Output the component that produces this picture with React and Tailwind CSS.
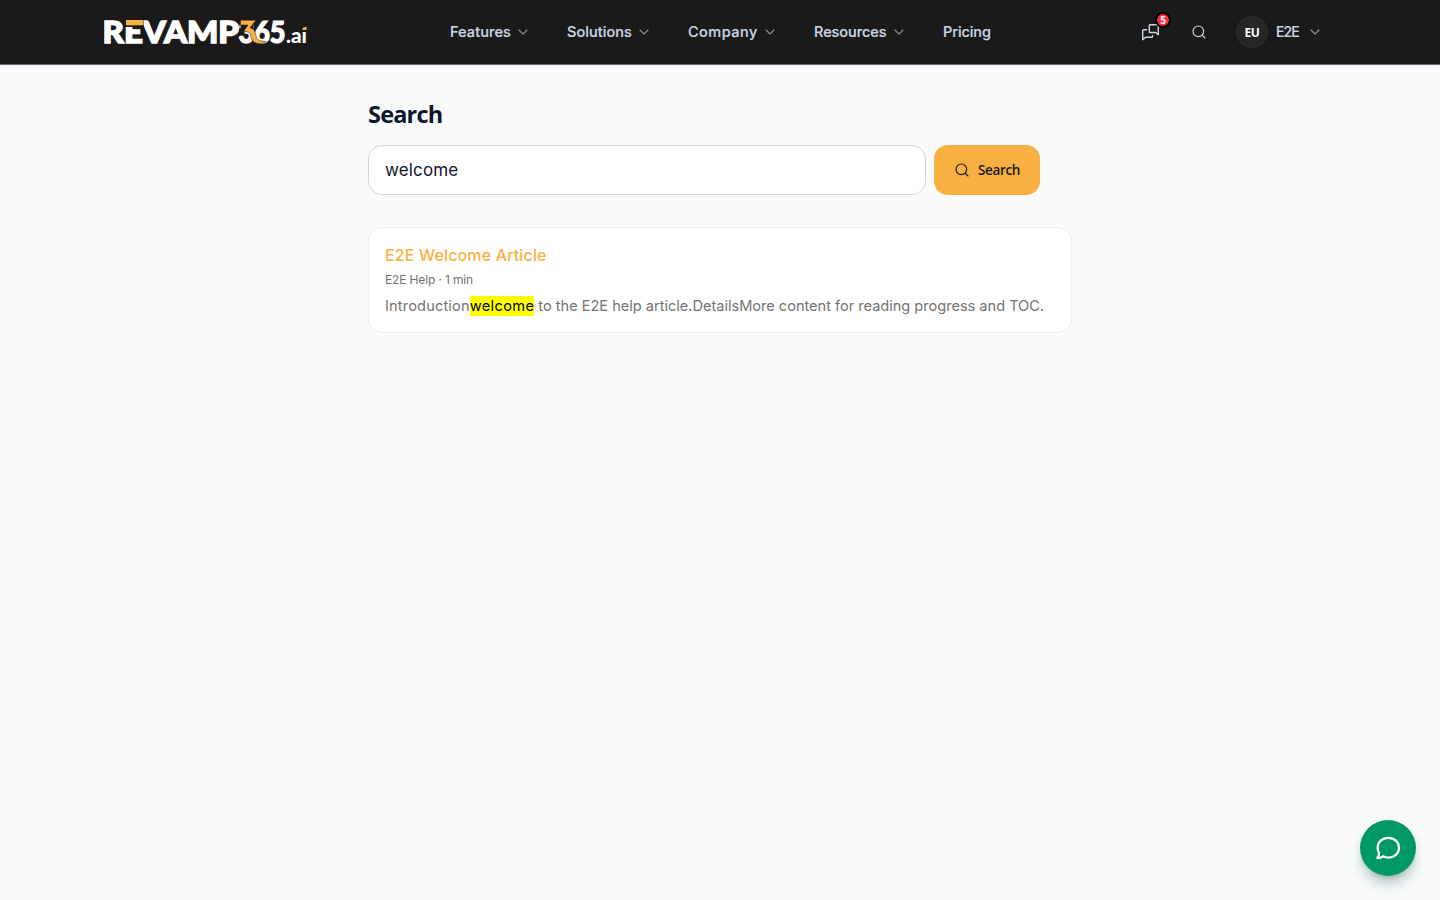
import React from "react";
import { ChevronDown, Search } from "lucide-react";

const NAV = [
  { label: "Features", cls: "w-[61px] tracking-[0.08px]", menu: true },
  { label: "Solutions", cls: "w-[65px] tracking-[0.06px]", menu: true },
  { label: "Company", cls: "w-[70px] tracking-[0.48px]", menu: true },
  { label: "Resources", cls: "w-[73px] tracking-[-0.05px]", menu: true },
  { label: "Pricing", cls: "w-[49px] tracking-[-0.1px]", menu: false },
];

function Logo() {
  return (
    <svg width="208" height="44" viewBox="0 -8 208 44" className="block" fontFamily="Lato, sans-serif" fontWeight="900" aria-label="REVAMP365.ai">
      <g fill="#fff" stroke="#fff" strokeWidth="1.4" fontSize="30">
        <text x="-1.5" y="24.8" textLength="136.5" lengthAdjust="spacingAndGlyphs">REVAMP</text>
      </g>
      <rect x="20.500" y="0" width="19" height="9" fill="#1a1a1a" />
      <rect x="22" y="2" width="17" height="5.300" fill="#f9b042" />
      <text y="24.800" fontSize="30" fill="#fff" stroke="#fff" strokeWidth="1.200" textLength="47" lengthAdjust="spacingAndGlyphs" x="134.500">365</text>
      <rect x="136.500" y="0" width="12.500" height="14" fill="#1a1a1a" />
      <path d="M136.500 2.200H152L146 9.800C151 11 151.200 15 152 18C153 22 156 23.200 162 23.500C160 25.500 157 26 154 25.500C148 24.500 147 20 146.500 17C146 14.200 144 13.500 139.500 13.800L144 7H136.500Z" fill="#f9b042" stroke="#1a1a1a" strokeWidth="0.500" />
      <text x="182" y="24.800" fill="#fff" fontSize="20" textLength="21" lengthAdjust="spacingAndGlyphs">.ai</text>
      <rect x="197.500" y="6" width="6" height="7" fill="#1a1a1a" />
      <path d="M198.500 10L202.500 8.500V12H198.500Z" fill="#f9b042" />
    </svg>
  );
}

function ChatsIcon() {
  return (
    <svg width="20" height="20" viewBox="0 0 20 20" fill="none" stroke="#cbd5e1" strokeWidth="1.4" strokeLinejoin="round" strokeLinecap="round">
      <path d="M9 2.700H17.300V12.700L14.800 10.500H8.300V3.500Q8.300 2.700 9 2.700Z" />
      <path d="M5.500 7.700H2.500Q1.700 7.700 1.700 8.500V17.700L4.500 15.300H10.800Q11.500 15.300 11.500 14.500V13.700" />
    </svg>
  );
}

export default function App() {
  return (
    <div className="min-h-screen bg-[#f9fafc] font-['Inter',sans-serif] text-slate-900">
      <header className="h-[65px] border-b border-[#64686d] bg-[#1a1a1a]">
        <div className="flex h-16 items-center pl-[104px] pr-[117px]">
          <a className="flex w-[346px] shrink-0"><Logo /></a>
          <nav className="flex items-center gap-9 text-[14.5px] font-medium text-slate-300">
            {NAV.map((n) => (
              <a key={n.label} className="flex items-center gap-1">
                <span className={"block whitespace-nowrap [-webkit-text-stroke:0.2px] " + n.cls}>{n.label}</span>
                {n.menu && <ChevronDown size={16} strokeWidth={1.75} className="text-[#858b94]" />}
              </a>
            ))}
          </nav>
          <div className="ml-auto flex items-center">
            <button className="relative mr-[30px] flex h-5 w-5">
              <ChatsIcon />
              <span className="absolute -right-[10px] -top-[10px] flex h-4 w-4 items-center justify-center rounded-full border-2 border-black bg-[#fb2c36] font-['Open_Sans',sans-serif] text-[10px] font-bold leading-none text-white">5</span>
            </button>
            <Search size={16} strokeWidth={1.75} className="mr-[29px] text-slate-300" />
            <span className="mr-2 flex h-8 w-8 items-center justify-center rounded-full border border-[#303030] bg-[#262626] pt-px font-['Open_Sans',sans-serif] text-xs font-bold tracking-[-0.3px] text-white">EU</span>
            <span className="w-[31px] text-sm font-medium tracking-[-0.9px] text-slate-300 [-webkit-text-stroke:0.2px]">E2E</span>
            <ChevronDown size={16} strokeWidth={1.75} className="text-[#8b929b]" />
          </div>
        </div>
      </header>
      <main className="mx-auto w-[704px] pt-[33px]">
        <h1 className="mb-[15px] font-['Open_Sans',sans-serif] text-[23.5px] font-bold leading-8 tracking-[-0.8px]">Search</h1>
        <form className="flex gap-2">
          <div className="flex h-[50px] w-[558px] items-center rounded-[14px] border border-gray-300 bg-white px-4 text-[17px] leading-6">
            <span className="tracking-[0.15px]">welcome</span>
          </div>
          <button type="button" className="flex h-[50px] w-[106px] items-center rounded-[14px] bg-[#f9b042] pl-5 font-['Open_Sans',sans-serif] text-[13.5px] font-semibold text-[#1a1a1a]">
            <Search size={16} strokeWidth={1.75} className="mr-2" />
            <span className="tracking-[-0.35px]">Search</span>
          </button>
        </form>
        <article className="mt-8 h-[106px] rounded-[14px] border border-[#ececee] bg-white px-4 pt-[15px]">
          <h2 className="text-base font-medium leading-6 tracking-[0.15px] text-[#f9b042]">E2E Welcome Article</h2>
          <p className="mt-[5px] text-xs leading-4 tracking-[-0.14px] text-[#737373]">E2E Help · 1 min</p>
          <p className="mt-2 whitespace-nowrap text-[14.6px] leading-5 text-[#737373]">
            <span className="tracking-[0.15px]">Introduction</span><mark className="bg-[#ffff00] py-px tracking-[0.35px] text-black">welcome</mark><span className="tracking-[-0.02px]"> to the E2E help article.DetailsMore content for reading progress and TOC.</span>
          </p>
        </article>
      </main>
      <button className="fixed bottom-6 right-6 flex h-14 w-14 items-center justify-center rounded-full bg-[#009966] text-white shadow-lg shadow-[#064e3b]/30">
        <svg width="28" height="28" viewBox="0 0 28 28" fill="none" stroke="currentColor" strokeWidth="2.200" strokeLinejoin="round" strokeLinecap="round">
          <path d="M14.300 3.800C20.500 3.800 25 8 25 13.700S20.500 23.600 14.300 23.600C12.200 23.600 10.500 23.100 9 22.300C7.200 23.600 5.200 24.300 3.300 24C4.700 22.300 5.300 20.500 5.100 18.800C4.100 17.300 3.600 15.600 3.600 13.700C3.600 8 8.100 3.800 14.300 3.800Z" />
        </svg>
      </button>
    </div>
  );
}
